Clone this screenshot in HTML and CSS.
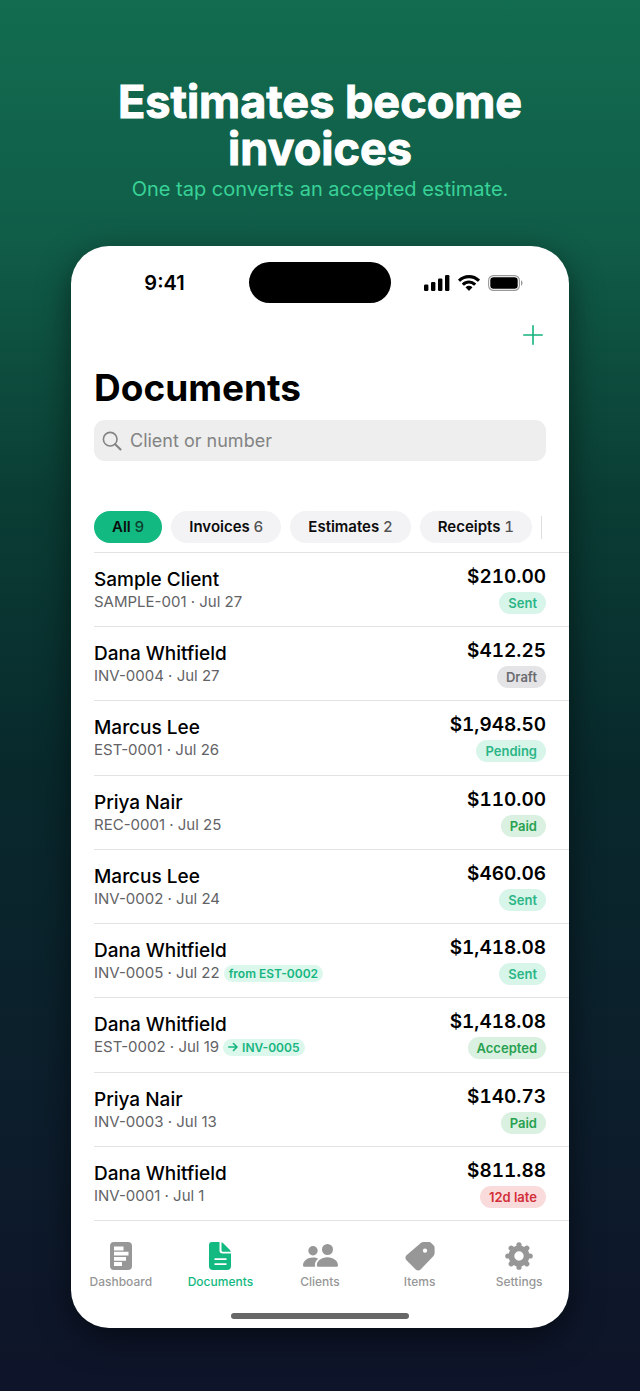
FILE: index.html
```html
<!DOCTYPE html>
<html lang="en">
<head>
<meta charset="utf-8">
<meta name="viewport" content="width=device-width, initial-scale=1">
<title>Estimates become invoices</title>
<link rel="stylesheet" href="styles.css">
</head>
<body>
<header class="promo">
  <h1 class="promo-title">Estimates become invoices</h1>
  <p class="promo-sub">One tap converts an accepted estimate.</p>
</header>

<main class="phone">
  <div class="status">
    <span class="status-time">9:41</span>
    <span class="island"></span>
    <span class="status-icons">
      <svg width="26" height="16" viewBox="0 0 26 16" aria-hidden="true"><rect x="0" y="9.5" width="4.4" height="6.5" rx="1.2"/><rect x="7" y="7" width="4.4" height="9" rx="1.2"/><rect x="14" y="3.5" width="4.4" height="12.5" rx="1.2"/><rect x="21" y="0" width="4.4" height="16" rx="1.2"/></svg>
      <svg width="22" height="16" viewBox="0 0 22 16" aria-hidden="true"><path d="M11 0C6.8 0 3 1.700.3 4.300a.5.5 0 0 0 0 .7l1.500 1.500a.5.5 0 0 0 .7 0A12.300 12.300 0 0 1 11 3.200c3.300 0 6.200 1.200 8.500 3.300a.5.5 0 0 0 .7 0l1.500-1.500a.5.5 0 0 0 0-.7A15.500 15.500 0 0 0 11 0z"/><path d="M11 5.500c-2.700 0-5.100 1-6.900 2.700a.5.5 0 0 0 0 .7l1.500 1.500a.5.5 0 0 0 .7 0A7 7 0 0 1 11 8.600a7 7 0 0 1 4.700 1.800.5.5 0 0 0 .7 0l1.500-1.500a.5.5 0 0 0 0-.7A10 10 0 0 0 11 5.500z"/><path d="M11 10.800c-1.200 0-2.300.4-3.100 1.100a.5.5 0 0 0 0 .8l2.700 2.900a.5.5 0 0 0 .8 0l2.700-2.900a.5.5 0 0 0 0-.8c-.8-.7-1.900-1.100-3.100-1.100z"/></svg>
      <svg width="35" height="16" viewBox="0 0 35 16" aria-hidden="true"><rect x=".6" y=".6" width="30.800" height="14.800" rx="4.800" fill="none" stroke="#999" stroke-width="1.100"/><rect x="2.300" y="2.300" width="27.400" height="11.400" rx="3.300"/><path d="M33 5.300c2 .8 2 4.600 0 5.400z" fill="#999"/></svg>
    </span>
  </div>

  <div class="toolbar">
    <button class="add" type="button" aria-label="New document">
      <svg width="20" height="20" viewBox="0 0 20 20" aria-hidden="true"><path d="M10 .8v18.400M.8 10h18.400"/></svg>
    </button>
  </div>

  <h2 class="heading">Documents</h2>

  <label class="search">
    <svg width="20" height="20" viewBox="0 0 20 20" aria-hidden="true"><circle cx="8.200" cy="8.200" r="6.800"/><path d="M13.200 13.200l5.300 5.300" stroke-width="2.100"/></svg>
    <input type="search" placeholder="Client or number" aria-label="Client or number">
  </label>

  <div class="chips">
    <button class="chip chip-on" type="button">All <span class="count">9</span></button>
    <button class="chip" type="button">Invoices <span class="count">6</span></button>
    <button class="chip" type="button">Estimates <span class="count">2</span></button>
    <button class="chip" type="button">Receipts <span class="count">1</span></button>
    <span class="chip-rule"></span>
  </div>

  <ul class="list">
    <li class="row"><div class="info"><span class="name">Sample Client</span><span class="meta">SAMPLE-001 · Jul 27</span></div><div class="sum"><span class="amount">$210.00</span><span class="badge sent">Sent</span></div></li>
    <li class="row"><div class="info"><span class="name">Dana Whitfield</span><span class="meta">INV-0004 · Jul 27</span></div><div class="sum"><span class="amount">$412.25</span><span class="badge draft">Draft</span></div></li>
    <li class="row"><div class="info"><span class="name">Marcus Lee</span><span class="meta">EST-0001 · Jul 26</span></div><div class="sum"><span class="amount">$1,948.50</span><span class="badge sent">Pending</span></div></li>
    <li class="row"><div class="info"><span class="name">Priya Nair</span><span class="meta">REC-0001 · Jul 25</span></div><div class="sum"><span class="amount">$110.00</span><span class="badge paid">Paid</span></div></li>
    <li class="row"><div class="info"><span class="name">Marcus Lee</span><span class="meta">INV-0002 · Jul 24</span></div><div class="sum"><span class="amount">$460.06</span><span class="badge sent">Sent</span></div></li>
    <li class="row"><div class="info"><span class="name">Dana Whitfield</span><span class="meta">INV-0005 · Jul 22 <span class="link">from EST-0002</span></span></div><div class="sum"><span class="amount">$1,418.08</span><span class="badge sent">Sent</span></div></li>
    <li class="row"><div class="info"><span class="name">Dana Whitfield</span><span class="meta">EST-0002 · Jul 19 <span class="link"><svg width="10" height="10" viewBox="0 0 10 10" aria-hidden="true"><path d="M.8 5h8M5.500 1.500L9 5 5.500 8.500"/></svg>INV-0005</span></span></div><div class="sum"><span class="amount">$1,418.08</span><span class="badge paid">Accepted</span></div></li>
    <li class="row"><div class="info"><span class="name">Priya Nair</span><span class="meta">INV-0003 · Jul 13</span></div><div class="sum"><span class="amount">$140.73</span><span class="badge paid">Paid</span></div></li>
    <li class="row"><div class="info"><span class="name">Dana Whitfield</span><span class="meta">INV-0001 · Jul 1</span></div><div class="sum"><span class="amount">$811.88</span><span class="badge late">12d late</span></div></li>
  </ul>

  <nav class="tabs">
    <a class="tab" href="#dashboard">
      <svg width="30" height="30" viewBox="0 0 30 30" aria-hidden="true"><path fill-rule="evenodd" d="M8 1h14a4 4 0 0 1 4 4v20a4 4 0 0 1-4 4H8a4 4 0 0 1-4-4V5a4 4 0 0 1 4-4zM8 5.500V9.500h9.500V5.500zM8 10.800v3.800h14.500v-3.800zM8 15.900v3.800h12v-3.800zM8 21v4h8v-4z"/></svg>
      Dashboard</a>
    <a class="tab tab-on" href="#documents">
      <svg width="30" height="30" viewBox="0 0 30 30" aria-hidden="true"><path fill-rule="evenodd" d="M7 1h7.500v8.500a3 3 0 0 0 3 3H26V25a4 4 0 0 1-4 4H8a4 4 0 0 1-4-4V4a3 3 0 0 1 3-3zM9.500 17.200v1.700h12v-1.700zM9.500 22.200v1.700h12v-1.700z"/><path d="M16.500 1.200c.8.200 1.300.6 2 1.300l6.200 6.300c.6.600.9 1.100 1.100 1.900h-8.200a1.100 1.100 0 0 1-1.100-1.100z"/></svg>
      Documents</a>
    <a class="tab" href="#clients">
      <svg width="36" height="30" viewBox="0 0 36 30" aria-hidden="true"><circle cx="11" cy="9.800" r="4.700"/><circle cx="25.500" cy="8.500" r="5.500"/><path d="M1 24.500C1 20 5.500 16.500 11 16.500c2 0 3.800.4 5.200 1.200-2 1.500-3.300 3.600-3.300 6.100 0 .7.100 1.400.4 2H3c-1.400 0-2-.4-2-1.300z"/><path d="M14.800 24.200c0-4.300 4.500-8 10.600-8s10.600 3.700 10.600 8c0 1.100-.7 1.600-2.100 1.600h-17c-1.400 0-2.100-.5-2.100-1.600z"/></svg>
      Clients</a>
    <a class="tab" href="#items">
      <svg width="30" height="30" viewBox="0 0 30 30" aria-hidden="true"><path fill-rule="evenodd" d="M15.500 2.300A4.500 4.500 0 0 1 18.600 1H24a3 3 0 0 1 2.200.9l2.500 2.600a3 3 0 0 1 .9 2.200V12a4.500 4.500 0 0 1-1.300 3.200L15.600 28.400c-1.500 1.500-3.400 1.500-4.900 0L1.500 19.300c-1.500-1.500-1.500-3.500 0-5zM20 7.400a2.200 2.200 0 1 0 0 4.400 2.200 2.200 0 0 0 0-4.400z"/></svg>
      Items</a>
    <a class="tab" href="#settings">
      <svg class="gear" width="30" height="30" viewBox="0 0 30 30" aria-hidden="true"><circle cx="15" cy="15" r="7.600" stroke-width="5.800"/><path d="M15 7V3.800M15 23v3.200M7 15H3.800M23 15h3.200M9.300 9.300L7.200 7.200M20.700 20.700l2.100 2.100M9.300 20.700l-2.100 2.100M20.700 9.300l2.100-2.100"/></svg>
      Settings</a>
  </nav>
  <div class="home"></div>
</main>
</body>
</html>
```

FILE: styles.css
```css
* { box-sizing: border-box; }
body {
  margin: 0;
  min-height: 100vh;
  padding: 78px 71px 63px;
  display: flex;
  flex-direction: column;
  font-family: Inter, "Liberation Sans", sans-serif;
  color: #000;
  background: linear-gradient(#126c4f 0%, #105d48 17%, #0a3d34 36%, #08292c 55%, #0c1d2b 80%, #0e1429 100%);
}
.promo { text-align: center; margin-bottom: 44px; }
.promo-title {
  max-width: 440px;
  margin: 0 auto;
  font-size: 45px;
  line-height: 47px;
  font-weight: 700;
  color: #fff;
  -webkit-text-stroke: 1px #fff;
}
.promo-sub { margin: 4px 0 0; font-size: 20px; line-height: 26px; font-weight: 400; color: #38d297; }
.phone {
  flex: 1;
  display: flex;
  flex-direction: column;
  overflow: hidden;
  background: #fff;
  border-radius: 38px;
  box-shadow: 0 10px 32px rgba(0, 0, 0, .5);
}
.status { display: grid; grid-template-columns: 1fr 142px 1fr; align-items: center; padding-top: 16px; }
.status-time { padding-left: 9px; text-align: center; font-size: 20px; font-weight: 600; }
.island { height: 41px; border-radius: 21px; background: #000; }
.status-icons { display: flex; gap: 8px; justify-content: center; padding-right: 14px; }
.toolbar { display: flex; justify-content: flex-end; padding: 19px 24px 0; }
.add { width: 24px; height: 26px; padding: 0; border: 0; background: none; display: grid; place-items: center; }
.add svg { stroke: #12b37d; stroke-width: 1.6; stroke-linecap: round; }
.heading { margin: 17px 23px 0; font-size: 37px; line-height: 46px; font-weight: 700; }
.search { display: flex; align-items: center; gap: 8px; margin: 9px 23px 0; height: 41px; padding: 0 8px; border-radius: 11px; background: #eee; }
.search svg { flex: none; fill: none; stroke: #838383; stroke-width: 1.6; stroke-linecap: round; }
.search input { flex: 1; min-width: 0; border: 0; padding: 0; outline: 0; background: none; font: 18px/24px Inter, "Liberation Sans", sans-serif; }
.search input::placeholder { color: #838383; opacity: 1; }
.chips { display: flex; align-items: center; gap: 9px; padding: 50px 23px 9px; white-space: nowrap; }
.chip { flex: none; height: 32px; padding: 0 18px; border: 0; border-radius: 16px; background: #f3f3f5; font: 600 15px/18px Inter, "Liberation Sans", sans-serif; color: #0c0c0c; }
.chip-on { background: #12b981; }
.count { font-weight: 500; font-variant-numeric: tabular-nums; opacity: .7; }
.chip-rule { width: 1px; height: 23px; background: #ddd; }
.list { flex: 1; display: flex; flex-direction: column; list-style: none; margin: 0 0 0 23px; padding: 0; border-bottom: 1px solid #e3e3e4; }
.row { flex: 1 0 72px; display: flex; justify-content: space-between; border-top: 1px solid #e3e3e4; padding: 11px 23px 0 0; }
.info, .sum { display: flex; flex-direction: column; }
.info { padding-top: 4px; }
.name { font-size: 19px; line-height: 24px; font-weight: 500; }
.meta { display: flex; align-items: center; gap: 4px; font-size: 15px; line-height: 20px; color: #636366; }
.link { display: flex; align-items: center; gap: 4px; padding: 0 5px; border-radius: 9px; background: #dcf7ec; color: #16b580; font-size: 12px; line-height: 17px; font-weight: 600; }
.link svg { fill: none; stroke: currentColor; stroke-width: 1.6; stroke-linecap: round; stroke-linejoin: round; }
.sum { align-items: flex-end; gap: 3px; }
.amount { font-size: 19px; line-height: 25px; font-weight: 600; font-variant-numeric: tabular-nums; }
.badge { padding: 0 9px; border-radius: 11px; font-size: 13px; line-height: 22px; font-weight: 600; }
.sent { background: #d8f5ea; color: #2bb586; }
.draft { background: #e4e4e6; color: #6b6b70; }
.paid { background: #daf0e0; color: #27a150; }
.late { background: #fadbdc; color: #d22f38; }
.tabs { display: grid; grid-template-columns: repeat(5, 1fr); padding-top: 20px; }
.tab { display: flex; flex-direction: column; align-items: center; gap: 3px; font-size: 12px; line-height: 16px; font-weight: 500; color: #979797; text-decoration: none; }
.tab svg { fill: currentColor; }
.tab .gear { fill: none; stroke: currentColor; stroke-width: 5.2; stroke-linecap: round; }
.tab-on { color: #12b981; }
.home { width: 178px; height: 6px; margin: 23px auto 9px; border-radius: 3px; background: #666; }
```
